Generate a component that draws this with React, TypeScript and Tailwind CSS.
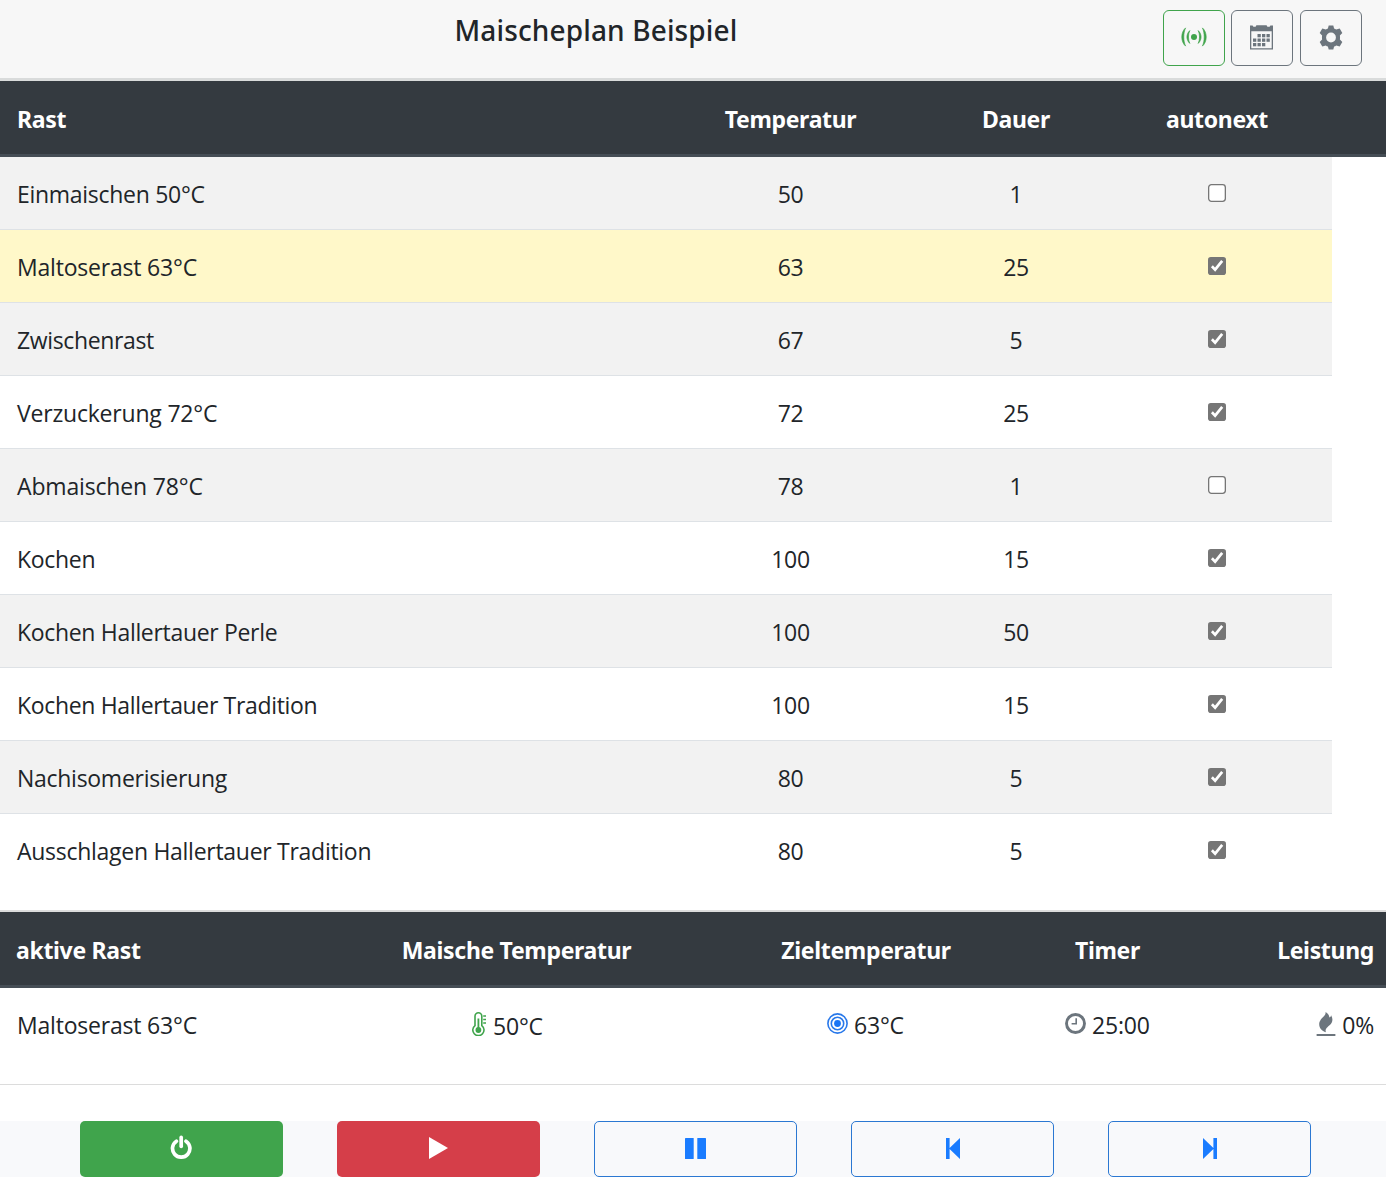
import React from "react";

type Rast = { name: string; tracking: string; temp: number; time: number; auto: boolean; active?: boolean };

const rasts: Rast[] = [
  { name: "Einmaischen 50°C", tracking: "tracking-[-0.29px]", temp: 50, time: 1, auto: false },
  { name: "Maltoserast 63°C", tracking: "tracking-[-0.2px]", temp: 63, time: 25, auto: true, active: true },
  { name: "Zwischenrast", tracking: "tracking-[-0.36px]", temp: 67, time: 5, auto: true },
  { name: "Verzuckerung 72°C", tracking: "tracking-[-0.2px]", temp: 72, time: 25, auto: true },
  { name: "Abmaischen 78°C", tracking: "tracking-[-0.16px]", temp: 78, time: 1, auto: false },
  { name: "Kochen", tracking: "tracking-[-0.3px]", temp: 100, time: 15, auto: true },
  { name: "Kochen Hallertauer Perle", tracking: "tracking-[-0.32px]", temp: 100, time: 50, auto: true },
  { name: "Kochen Hallertauer Tradition", tracking: "tracking-[-0.34px]", temp: 100, time: 15, auto: true },
  { name: "Nachisomerisierung", tracking: "tracking-[-0.28px]", temp: 80, time: 5, auto: true },
  { name: "Ausschlagen Hallertauer Tradition", tracking: "tracking-[-0.28px]", temp: 80, time: 5, auto: true },
];

function Antenna() {
  return (
    <svg width="26" height="20" viewBox="0 0 26 20" fill="currentColor" className="-mt-0.5">
      <circle cx="13" cy="10" r="3" />
      <path d="M8.8 3.6C5 7 5 13 8.8 16.4C7 13 7 7 8.8 3.6ZM17.2 3.6C21 7 21 13 17.2 16.4C19 13 19 7 17.2 3.6Z" stroke="currentColor" strokeWidth="0.7" />
      <path d="M4.6 0.9C-0.5 5 -0.5 15 4.6 19.1C2.2 14 2.2 6 4.6 0.9ZM21.4 0.9C26.5 5 26.5 15 21.4 19.1C23.8 14 23.8 6 21.4 0.9Z" stroke="currentColor" strokeWidth="0.6" />
    </svg>
  );
}

function Calendar() {
  const cells: [number, number][] = [
    [7.5, 9], [12, 9], [16.5, 9],
    [3, 13.5], [7.5, 13.5], [12, 13.5], [16.5, 13.5],
    [3, 18], [7.5, 18], [12, 18],
  ];
  return (
    <svg width="23" height="25" viewBox="0 0 23 25" fill="currentColor" className="-mt-0.5 mr-px">
      <path
        d="M0 0.6H2.6L3.4 1.8H5.6L6.4 0.3H16.6L17.4 1.8H19.6L20.4 0.6H23V24.5H0ZM1.3 6.3V23.2H21.7V6.3Z"
        fillRule="evenodd"
      />
      {cells.map(([x, y], i) => (
        <rect key={i} x={x} y={y} width="3.3" height="3.3" />
      ))}
    </svg>
  );
}

function Gear() {
  return (
    <svg width="24" height="25" viewBox="0 0 24 25" fill="currentColor" className="-mt-0.5">
      <path
        fillRule="evenodd"
        d="M9.7 0.4H14.3L15.1 3.4Q16.2 3.8 17.2 4.6L20.7 3.6L23.3 8L20.9 10.6Q21.2 12.5 20.9 14.4L23.3 17L20.7 21.4L17.2 20.4Q16.2 21.2 15.1 21.6L14.3 24.6H9.7L8.9 21.6Q7.8 21.2 6.8 20.4L3.3 21.4L0.7 17L3.1 14.4Q2.8 12.5 3.1 10.6L0.7 8L3.3 3.6L6.8 4.6Q7.8 3.8 8.9 3.4ZM12 7.6A4.9 4.9 0 1 0 12 17.4A4.9 4.9 0 1 0 12 7.6Z"
      />
    </svg>
  );
}

function Check({ on }: { on: boolean }) {
  return (
    <svg width="18" height="18" viewBox="0 0 18 18" className="mr-px block">
      {on ? (
        <>
          <rect width="18" height="18" rx="2.8" fill="#767676" />
          <path d="M3.9 9.3L7.1 12.6L14.2 3.8" fill="none" stroke="#fff" strokeWidth="2.7" />
        </>
      ) : (
        <rect x="0.65" y="0.65" width="16.7" height="16.7" rx="2.8" fill="#fff" stroke="#767676" strokeWidth="1.3" />
      )}
    </svg>
  );
}

function Thermometer() {
  return (
    <svg width="15" height="24" viewBox="0 0 15 24" fill="none" stroke="#40a44c">
      <path d="M3 13.6V4.2A3.4 3.4 0 0 1 9.8 4.2V13.6A5.6 5.6 0 1 1 3 13.6Z" strokeWidth="1.6" />
      <path d="M6.4 6.5V18" strokeWidth="1.8" />
      <circle cx="6.4" cy="18" r="2.9" fill="#40a44c" stroke="none" />
      <path d="M11.2 4H14M11.2 7.5H14M11.2 11H14" strokeWidth="1.5" />
    </svg>
  );
}

function Target() {
  return (
    <svg width="21" height="21" viewBox="0 0 21 21" fill="none" stroke="#2878ea">
      <circle cx="10.5" cy="10.5" r="9.6" strokeWidth="1.6" />
      <circle cx="10.5" cy="10.5" r="6.2" strokeWidth="1.6" />
      <circle cx="10.5" cy="10.5" r="3.4" fill="#1a75f5" stroke="none" />
    </svg>
  );
}

function Clock() {
  return (
    <svg width="21" height="21" viewBox="0 0 21 21" fill="none" stroke="#6c757d">
      <circle cx="10.5" cy="10.5" r="9" strokeWidth="2.9" />
      <path d="M11.2 5.2V10.8H6.6" strokeWidth="1.6" />
    </svg>
  );
}

function Flame() {
  return (
    <svg width="20" height="25" viewBox="0 0 20 25" fill="#6c757d">
      <path d="M9.4 0C11 3.4 3.2 6.4 3.2 12.2C3.2 16.4 6 18.9 9.9 20.2C9.2 18.2 9.6 16.8 11.4 15.2C14 13 16.4 11.4 16.4 7.6C16.4 5.8 15.8 4.6 15.1 3.2C14.9 4.3 14.4 5 13.4 5.6C13.2 3 11.8 1 9.4 0Z" />
      <rect x="0.5" y="22" width="19" height="1.9" rx="0.6" />
    </svg>
  );
}

function Power() {
  return (
    <svg width="22" height="24" viewBox="0 0 22 24" fill="none" stroke="#fff" strokeWidth="3.7" strokeLinecap="round" className="-mt-1 mr-px">
      <path d="M6.4 6.2A8.7 8.7 0 1 0 16 6.2" />
      <path d="M11.2 2.4V11.3" />
    </svg>
  );
}

const head = "flex h-[76px] border-b-[3px] border-[#454d55] bg-[#343a40] pt-5 font-['Noto_Sans',sans-serif] font-bold tracking-[-0.32px] text-white";
const topButton = "flex h-14 w-[62px] items-center justify-center rounded-md border";
const outline = "flex h-14 w-[203px] items-center justify-center rounded-[5px] border border-[#2b78d2] text-[#1a7cff]";

export default function App() {
  return (
    <div className="flex h-[1184px] w-[1386px] flex-col overflow-hidden bg-white font-['Open_Sans','Noto_Sans',sans-serif] text-[23px] leading-9 whitespace-nowrap text-[#212529]">
      <header className="flex h-[81px] shrink-0 items-start border-b-[3px] border-[#d9dbdb] bg-[#f7f7f7] pr-6 pl-[454.5px]">
        <h1 className="flex-1 pt-[14px] font-['Noto_Sans',sans-serif] text-[28px] leading-8 font-medium tracking-[0.14px]">
          Maischeplan Beispiel
        </h1>
        <div className="flex pt-[10px]">
          <button className={`${topButton} border-[#40a44c] text-[#40a44c]`}>
            <Antenna />
          </button>
          <button className={`${topButton} ml-1.5 border-[#6c757d] text-[#6c757d]`}>
            <Calendar />
          </button>
          <button className={`${topButton} ml-[7px] border-[#6c757d] text-[#6c757d]`}>
            <Gear />
          </button>
        </div>
      </header>

      <section className="h-[831px] shrink-0 border-b-2 border-[#dcdcdc]">
        <div className={head}>
          <div className="w-[651px] pl-[17px]">Rast</div>
          <div className="w-[279px] text-center">Temperatur</div>
          <div className="w-[172px] text-center">Dauer</div>
          <div className="w-[230px] text-center">autonext</div>
        </div>
        <div className="w-[1332px]">
          {rasts.map((r, i) => (
            <div
              key={r.name}
              className={`flex h-[73px] pt-[19px] ${i < rasts.length - 1 ? "border-b border-[#dee2e6]" : ""} ${
                r.active ? "bg-[#fff8c9]" : i % 2 === 0 ? "bg-[#f2f2f2]" : "bg-white"
              }`}
            >
              <div className={`w-[651px] pl-[17px] ${r.tracking}`}>{r.name}</div>
              <div className="w-[279px] text-center tracking-[-0.3px]">{r.temp}</div>
              <div className="w-[172px] text-center tracking-[-0.3px]">{r.time}</div>
              <div className="flex w-[230px] justify-center pt-2">
                <Check on={r.auto} />
              </div>
            </div>
          ))}
        </div>
      </section>

      <section className="h-[173px] shrink-0 border-b border-[#dcdcdc]">
        <div className={head}>
          <div className="w-[352px] pl-4">aktive Rast</div>
          <div className="w-[329px] text-center">Maische Temperatur</div>
          <div className="w-[370px] text-center">Zieltemperatur</div>
          <div className="w-[113px] text-center">Timer</div>
          <div className="w-[222px] pr-3 text-right">Leistung</div>
        </div>
        <div className="flex pt-[19px] tracking-[-0.2px]">
          <div className="w-[352px] pl-[17px]">Maltoserast 63°C</div>
          <div className="flex w-[329px] items-start pl-[120px]">
            <span className="pt-[5px]">
              <Thermometer />
            </span>
            <span className="pt-px pl-[6px]">50°C</span>
          </div>
          <div className="flex w-[370px] items-start pl-[146px]">
            <span className="pt-[6px]">
              <Target />
            </span>
            <span className="pl-[6px]">63°C</span>
          </div>
          <div className="flex w-[113px] items-start pl-[14px]">
            <span className="pt-[6px]">
              <Clock />
            </span>
            <span className="pl-[6px]">25:00</span>
          </div>
          <div className="flex w-[222px] items-start justify-end pr-3">
            <span className="pt-[5px]">
              <Flame />
            </span>
            <span className="pl-[6px]">0%</span>
          </div>
        </div>
      </section>

      <footer className="mt-9 flex h-14 shrink-0 gap-[54px] bg-[#f8f9fb] pl-20">
        <button className="flex h-14 w-[203px] items-center justify-center rounded-[5px] bg-[#40a44c]">
          <Power />
        </button>
        <button className="flex h-14 w-[203px] items-center justify-center rounded-[5px] bg-[#d53e49]">
          <svg width="19" height="22" viewBox="0 0 19 22" fill="#fff" className="-mt-0.5">
            <path d="M0 0L19 11L0 22Z" />
          </svg>
        </button>
        <button className={outline}>
          <svg width="21" height="21" viewBox="0 0 21 21" fill="currentColor" className="-mt-0.5">
            <rect width="8.7" height="21" rx="0.6" />
            <rect x="12.3" width="8.7" height="21" rx="0.6" />
          </svg>
        </button>
        <button className={outline}>
          <svg width="14" height="21" viewBox="0 0 14 21" fill="currentColor" className="-mt-0.5">
            <path d="M0 0H3.6V10L14 0V21L3.6 11V21H0Z" />
          </svg>
        </button>
        <button className={outline}>
          <svg width="14" height="21" viewBox="0 0 14 21" fill="currentColor" className="-mt-0.5">
            <path d="M14 0H10.4V10L0 0V21L10.4 11V21H14Z" />
          </svg>
        </button>
      </footer>
    </div>
  );
}
